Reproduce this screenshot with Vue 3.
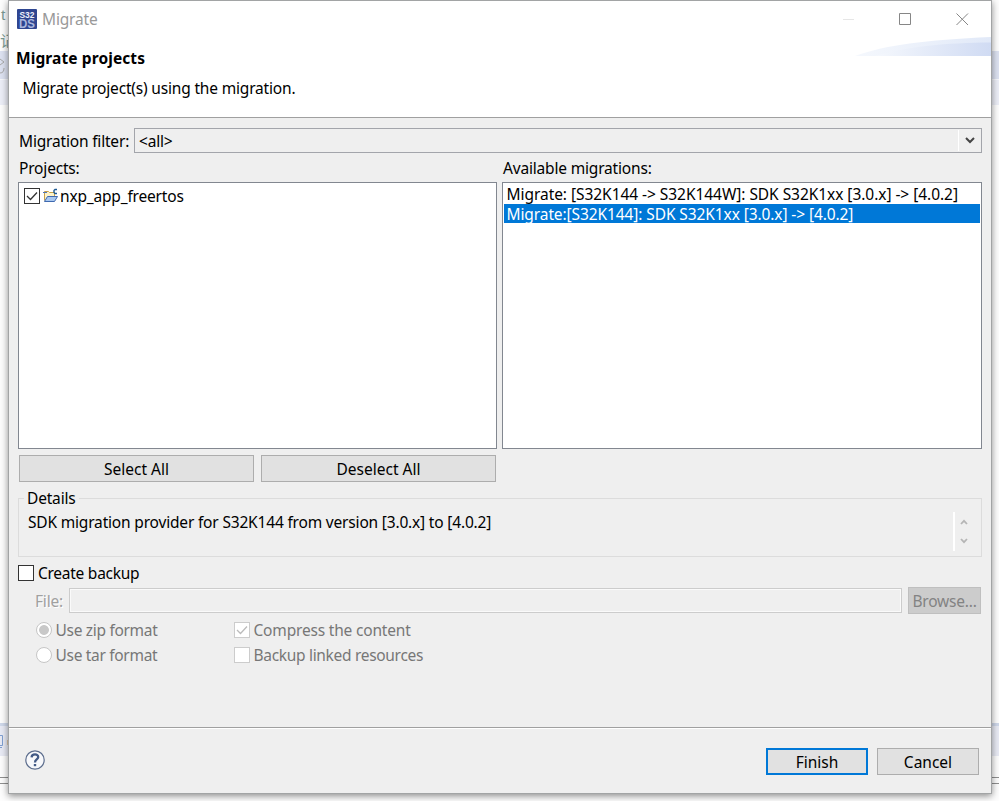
<template>
  <div class="desktop">
    <div class="gutter left">
      <div class="clip code">t</div>
      <div class="clip cjk">记</div>
      <div class="band tabs">
        <svg width="8" height="26" viewBox="0 0 8 26">
          <path d="M0 8l4 3-4 3M0 22c3 0 4-2 4-5" fill="none" stroke="#a9a9a9" />
        </svg>
      </div>
      <div class="band toolbar"></div>
      <div class="spacer"></div>
      <div class="band edge"></div>
      <div class="band views">
        <svg width="8" height="27" viewBox="0 0 8 27">
          <path d="M0 9.500h2.500v10H0M0 21.500h2" fill="none" stroke="#7f9fd0" />
          <path d="M8 14v5" stroke="#d9a860" />
        </svg>
      </div>
      <div class="rules"></div>
    </div>

    <div class="dialog">
      <header class="header">
        <div class="titlebar">
          <svg class="app-icon" width="20" height="20" viewBox="0 0 20 20">
            <rect x="0" y="0" width="20" height="20" rx="1" fill="#2f4691" />
            <text class="logo-text" x="10" y="8.500" textLength="15" lengthAdjust="spacingAndGlyphs" fill="#eef1fa">S32</text>
            <text class="logo-text big" x="10" y="18.500" textLength="16" lengthAdjust="spacingAndGlyphs" fill="#a9b6dd">DS</text>
          </svg>
          <span class="title">Migrate</span>
          <svg class="controls" width="130" height="14" viewBox="0 0 130 14">
            <path d="M0 7.500h11" stroke="#e6e6e6" />
            <path d="M56.500 1.500h11v11h-11z" fill="none" stroke="#868686" />
            <path d="M113.500 1.500l11.500 11.500M125 1.500l-11.500 11.500" stroke="#868686" fill="none" />
          </svg>
        </div>
        <h1>Migrate projects</h1>
        <p>Migrate project(s) using the migration.</p>
        <svg class="swoosh" width="136" height="20" viewBox="0 0 136 20">
          <defs>
            <linearGradient id="swooshLight">
              <stop offset="0" stop-color="#f5f8fd" />
              <stop offset="1" stop-color="#e1e9f8" />
            </linearGradient>
            <linearGradient id="swooshDark">
              <stop offset="0" stop-color="#f5f8fd" />
              <stop offset="1" stop-color="#d0dbf3" />
            </linearGradient>
          </defs>
          <path d="M0 19C30 8 70 3 136 0v19z" fill="url(#swooshLight)" />
          <path d="M20 19C55 9 90 6 136 5.500V19z" fill="url(#swooshDark)" />
        </svg>
      </header>

      <main class="body">
        <div class="filter">
          <span>Migration filter:</span>
          <div class="combo">
            <span>&lt;all&gt;</span>
            <i class="combo-button">
              <svg width="10" height="7" viewBox="0 0 10 7">
                <path d="M1 1l4 4 4-4" fill="none" stroke="#444" stroke-width="2" />
              </svg>
            </i>
          </div>
        </div>

        <div class="lists">
          <section>
            <div class="caption">Projects:</div>
            <div class="list projects">
              <div v-for="p in projects" :key="p" class="project">
                <span class="check"><svg width="16" height="16" viewBox="0 0 16 16"><path d="M3 8l3.500 3.500L13 4.500" /></svg></span>
                <svg class="folder" width="17" height="15" viewBox="0 0 17 15">
                  <path d="M2.500 12.500v-9h4l1 1h5v4" fill="#fdf3c9" stroke="#c7a048" />
                  <path d="M1 4.500h4" stroke="#4f76b5" />
                  <path d="M2.500 13.500l3-5h10l-3 5z" fill="#a9c8f0" stroke="#3f69b0" />
                  <path d="M15 1.500h-2l-1 1v2l1 1h2" fill="none" stroke="#1d5a94" stroke-width="1.400" />
                </svg>
                <span>{{ p }}</span>
              </div>
            </div>
          </section>
          <section>
            <div class="caption">Available migrations:</div>
            <div class="list">
              <div
                v-for="(m, i) in migrations"
                :key="m"
                class="migration"
                :class="{ selected: i === selected }"
                @click="selected = i"
              >{{ m }}</div>
            </div>
          </section>
        </div>

        <div class="select-buttons">
          <button>Select All</button>
          <button>Deselect All</button>
        </div>

        <fieldset class="details">
          <legend>Details</legend>
          <span>SDK migration provider for S32K144 from version [3.0.x] to [4.0.2]</span>
          <div class="scroll">
            <svg width="8" height="6" viewBox="0 0 8 6"><path d="M1 5l3-3.200L7 5" /></svg>
            <svg width="8" height="6" viewBox="0 0 8 6"><path d="M1 1l3 3.200L7 1" /></svg>
          </div>
        </fieldset>

        <div class="backup">
          <span class="check"></span>
          <span>Create backup</span>
        </div>
        <div class="file">
          <span class="file-label">File:</span>
          <div class="file-input"></div>
          <button disabled>Browse...</button>
        </div>
        <div class="options">
          <div class="option"><i class="radio on"></i><span>Use zip format</span></div>
          <div class="option">
            <span class="check off"><svg width="16" height="16" viewBox="0 0 16 16"><path d="M3 8l3.500 3.500L13 4.500" /></svg></span>
            <span class="compress">Compress the content</span>
          </div>
          <div class="option"><i class="radio"></i><span>Use tar format</span></div>
          <div class="option"><span class="check off"></span><span>Backup linked resources</span></div>
        </div>
      </main>

      <footer class="footer">
        <svg class="help" width="20" height="20" viewBox="0 0 20 20">
          <circle cx="10" cy="10" r="9.200" fill="#f7f8fb" stroke="#5c6d8d" stroke-width="1.200" />
          <path d="M6.600 7.400C6.800 3.200 13.400 3.400 13.200 7.200C13 9.600 10 9.500 10 12.500" fill="none" stroke="#435a86" stroke-width="2.300" />
          <path d="M8.800 14h2.400v2.200H8.800z" fill="#435a86" />
        </svg>
        <button class="primary">Finish</button>
        <button>Cancel</button>
      </footer>
    </div>

    <div class="gutter right">
      <div class="band tabs"></div>
      <div class="band toolbar"></div>
      <div class="spacer"></div>
      <div class="band edge"></div>
      <div class="band views"></div>
      <div class="rules"></div>
    </div>
  </div>
</template>

<script setup>
import { ref } from "vue";

const projects = ["nxp_app_freertos"];
const migrations = [
  "Migrate: [S32K144 -> S32K144W]: SDK S32K1xx [3.0.x] -> [4.0.2]",
  "Migrate:[S32K144]: SDK S32K1xx [3.0.x] -> [4.0.2]",
];
const selected = ref(1);
</script>

<style>
body {
  margin: 0;
  overflow: hidden;
  background: #fff;
}
</style>

<style scoped>
.desktop {
  display: flex;
  width: 999px;
  height: 801px;
  overflow: hidden;
  box-sizing: border-box;
  background: #fdfdfd;
  font: 15.5px/20px "Noto Sans", sans-serif;
  letter-spacing: -0.18px;
  color: #000;
  white-space: nowrap;
}
.desktop * {
  box-sizing: border-box;
}
svg {
  display: block;
  flex: none;
}

/* slivers of the workbench behind the dialog */
.gutter {
  display: flex;
  flex-direction: column;
  width: 8px;
  height: 801px;
  overflow: hidden;
}
.gutter.right {
  width: 7px;
  padding-top: 51px;
}
.clip {
  width: 8px;
  overflow: hidden;
  color: #7b9a93;
}
.code {
  height: 30px;
  padding: 5px 0 0 1px;
  font-family: "Liberation Sans", sans-serif;
}
.cjk {
  height: 21px;
  font-family: "Noto Sans CJK SC", sans-serif;
}
.band {
  flex: none;
}
.tabs {
  height: 28px;
  background: #dde2f1;
}
.toolbar {
  height: 26px;
  background: #eceef7;
  border-top: 1px solid #f7f8fc;
}
.spacer {
  flex: 1;
}
.edge {
  height: 3px;
  background: #cfd8ea;
}
.views {
  height: 30px;
  background: #e8eaf4;
}
.rules {
  height: 45px;
  padding-top: 21px;
}
.rules::before {
  content: "";
  display: block;
  height: 5px;
  border-top: 1px solid #8f8f8f;
  border-bottom: 1px solid #8f8f8f;
}

.dialog {
  position: relative;
  display: flex;
  flex-direction: column;
  width: 984px;
  height: 794px;
  border: 1px solid #a2a4a5;
  background: #efefef;
  box-shadow: 0 2px 7px rgba(0, 0, 0, 0.45);
}
.header {
  position: relative;
  height: 117px;
  background: #fff;
  border-bottom: 1px solid #a0a0a0;
}
.titlebar {
  display: flex;
  align-items: center;
  height: 35px;
  padding: 0 18px 0 8px;
}
.logo-text {
  font: bold 9.5px "Liberation Sans", sans-serif;
  letter-spacing: 0;
  text-anchor: middle;
}
.logo-text.big {
  font-size: 12px;
}
.title {
  margin-left: 5px;
  color: #999;
}
.controls {
  margin-left: auto;
}
h1 {
  margin: 12px 0 0 7px;
  font-size: 15.5px;
  line-height: 20px;
  letter-spacing: 0.1px;
}
p {
  margin: 10px 0 0 13.5px;
}
.swoosh {
  position: absolute;
  right: 0;
  top: 36px;
}

.body {
  flex: 1;
  padding: 10px 9px 0 9px;
}
.filter {
  display: flex;
  align-items: center;
  justify-content: space-between;
  height: 25px;
  padding-left: 1px;
}
.combo {
  display: flex;
  align-items: center;
  justify-content: space-between;
  width: 848px;
  height: 25px;
  padding-left: 4px;
  border: 1px solid #a3a5ab;
}
.combo-button {
  display: flex;
  align-items: center;
  justify-content: center;
  width: 23px;
  height: 21px;
  border-left: 1px solid #fff;
}
.lists {
  display: grid;
  grid-template-columns: 479px 480px;
  gap: 5px;
}
.caption {
  height: 29px;
  padding: 5px 0 0 1px;
}
.list {
  height: 267px;
  padding: 2px 1px;
  border: 1px solid #828790;
  background: #fff;
}
.projects {
  padding: 3px 5px;
}
.project {
  display: flex;
  align-items: center;
  height: 20px;
}
.check {
  flex: none;
  width: 16px;
  height: 16px;
  border: 1px solid #333;
  background: #fff;
}
.check svg {
  margin: -1px;
}
.check path {
  fill: none;
  stroke: #333;
  stroke-width: 1.3;
}
.check.off {
  border-color: #ccc;
}
.check.off path {
  stroke: #bbb;
}
.folder {
  margin: -2px 1px 0 2px;
}
.migration {
  height: 19px;
  padding-left: 2.5px;
  line-height: 19px;
  letter-spacing: -0.05px;
}
.selected {
  color: #fff;
  background: #0078d7;
  line-height: 20px;
  letter-spacing: -0.1px;
}

button {
  height: 27px;
  padding: 0;
  border: 1px solid #adadad;
  border-radius: 0;
  background: #e1e1e1;
  color: #000;
  font: inherit;
}
.select-buttons {
  display: flex;
  gap: 7px;
  padding: 6px 1px 0;
}
.select-buttons button {
  width: 235px;
}

.details {
  display: flex;
  justify-content: space-between;
  height: 69px;
  margin: 6px 0 0;
  padding: 4px 9px 0 9px;
  border: 1px solid #dcdcdc;
  line-height: 20px;
}
.details legend {
  margin-left: -4px;
  padding: 0 3px;
}
.scroll {
  display: flex;
  flex-direction: column;
  align-items: center;
  gap: 13px;
  width: 19px;
  height: 39px;
  padding-top: 7px;
  border-left: 2px solid #fff;
}
.scroll path {
  fill: none;
  stroke: #b5b5b5;
  stroke-width: 1.8;
}

.backup {
  display: flex;
  align-items: center;
  gap: 4px;
  height: 20px;
  margin-top: 6px;
  letter-spacing: -0.26px;
}
.file {
  display: flex;
  align-items: center;
  height: 27px;
  margin-top: 4px;
  padding-left: 17px;
}
.file-label {
  width: 34px;
  padding-top: 1px;
  color: #a0a0a0;
  text-shadow: 1px 1px #fff;
}
.file-input {
  width: 833px;
  height: 25px;
  border: 1px solid #ccc;
  box-shadow: inset 0 0 0 1px #fafafa;
}
button:disabled {
  width: 73px;
  margin-left: 6px;
  border-color: #bfbfbf;
  background: #ccc;
  color: #838383;
  letter-spacing: -0.2px;
}
.options {
  display: grid;
  grid-template-columns: 198px 300px;
  grid-auto-rows: 24.5px;
  padding: 4px 0 0 17.5px;
  color: #777;
  letter-spacing: -0.31px;
}
.option {
  display: flex;
  align-items: center;
  gap: 4px;
}
.compress {
  letter-spacing: -0.18px;
}
.radio {
  width: 16px;
  height: 16px;
  border: 1px solid #c6c6c6;
  border-radius: 50%;
  background: #fff;
}
.radio.on {
  background: radial-gradient(circle, #c8c8c8 4.5px, #fff 5.3px);
}

.footer {
  display: flex;
  align-items: center;
  gap: 9px;
  height: 66px;
  padding: 2px 12px 0 16px;
  border-top: 1px solid #a0a0a0;
  box-shadow: inset 0 1px #fff;
}
.footer button {
  width: 102px;
}
.help {
  margin: -3px auto 0 0;
}
.footer .primary {
  border: 2px solid #0078d7;
}
</style>
